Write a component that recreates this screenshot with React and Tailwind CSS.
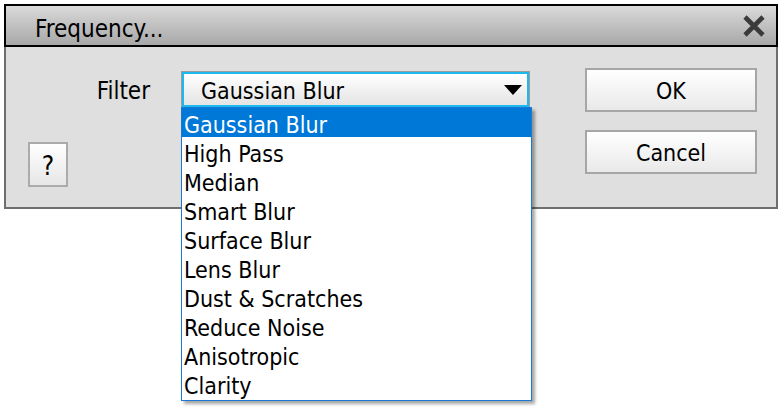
import React from "react";

const items = [
  "Gaussian Blur",
  "High Pass",
  "Median",
  "Smart Blur",
  "Surface Blur",
  "Lens Blur",
  "Dust & Scratches",
  "Reduce Noise",
  "Anisotropic",
  "Clarity",
];

export default function App() {
  return (
    <div className="relative w-[782px] h-[408px] bg-white text-black overflow-hidden font-['DejaVu_Sans_Condensed','DejaVu_Sans',sans-serif]">
      <div className="ml-[4px] pt-[4px] w-[774px] flex flex-col">
        {/* Title bar */}
        <div className="h-[43px] border-2 border-black bg-gradient-to-b from-[#dadada] to-[#a8a8a8] flex items-center justify-between">
          <span className="pl-[29px] pt-[6px] text-[24px] leading-none">Frequency...</span>
          <svg width="24" height="24" viewBox="0 0 24 24" className="mr-[10px] mt-[1px]">
            <path d="M3 3 L21 21 M21 3 L3 21" stroke="#3a3a3a" strokeWidth="4.6" strokeLinecap="butt" />
          </svg>
        </div>
        {/* Body */}
        <div className="h-[162px] bg-[#dfdfdf] border-l-2 border-r-2 border-b-2 border-[#6e6e6e] flex items-start">
          <button className="ml-[22px] mt-[95px] w-[40px] h-[45px] border-2 border-[#ababab] bg-gradient-to-b from-white to-[#e6e6e6] text-[26px] leading-none pt-[3px] flex items-center justify-center">
            ?
          </button>
          <div className="w-[113px] h-[37px] mt-[24px] flex items-center justify-end pr-[31px] pt-[3px] text-[24px] leading-none">
            Filter
          </div>
          <div className="w-[349px] h-[37px] mt-[24px] border border-[#9c9c9c]">
            <div className="w-full h-full border-2 border-[#1cb9ef] bg-gradient-to-b from-white to-[#e4e4e4] flex items-center justify-between pl-[17px] pr-[5px]">
              <span className="text-[23px] leading-none pt-[3px]">Gaussian Blur</span>
              <svg width="18" height="10" viewBox="0 0 18 10">
                <path d="M0 0 H18 L9 10 Z" fill="#000" />
              </svg>
            </div>
          </div>
          <div className="ml-[55px] mt-[21px] flex flex-col gap-[18px]">
            <button className="w-[172px] h-[44px] border-2 border-[#a6a6a6] bg-gradient-to-b from-white to-[#e9e9e9] text-[23px] leading-none pt-[3px] flex items-center justify-center">
              OK
            </button>
            <button className="w-[172px] h-[44px] border-2 border-[#a6a6a6] bg-gradient-to-b from-white to-[#e9e9e9] text-[23px] leading-none pt-[3px] flex items-center justify-center">
              Cancel
            </button>
          </div>
        </div>
      </div>

      {/* Dropdown list */}
      <div className="absolute left-[181px] top-[107px] w-[351px] h-[294px] bg-white border border-[#1a78d4] shadow-[3px_3px_3px_rgba(0,0,0,0.35)] flex flex-col">
        {items.map((it, i) => (
          <div
            key={it}
            className={
              "h-[29px] flex items-center pl-[2px] pt-[5px] text-[23px] leading-none " +
              (i === 0 ? "bg-[#0078d7] text-white" : "text-black")
            }
          >
            {it}
          </div>
        ))}
      </div>
    </div>
  );
}
